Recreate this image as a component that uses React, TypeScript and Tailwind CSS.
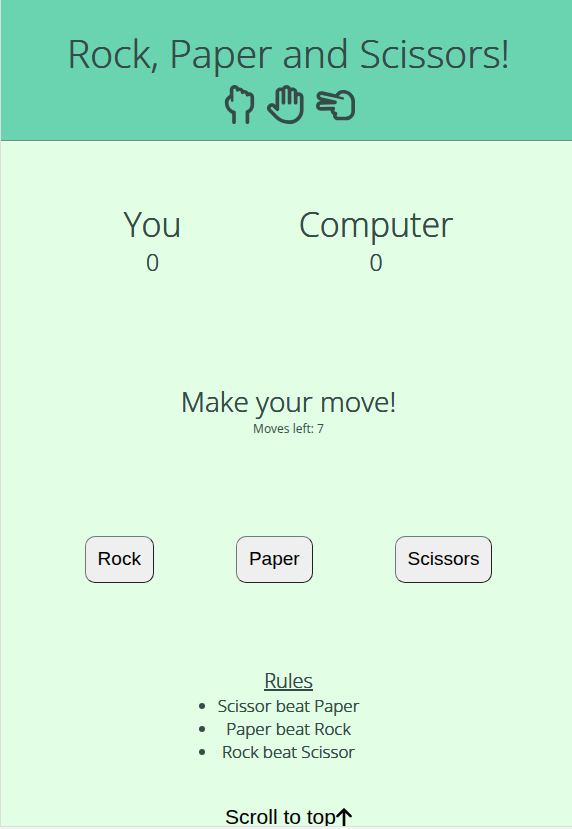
import { FaRegHandBackFist, FaRegHand, FaRegHandScissors, FaArrowUp } from "react-icons/fa6";

const rules = ["Scissor beat Paper", "Paper beat Rock", "Rock beat Scissor"];

function Score({ name, value }: { name: string; value: number }) {
  return (
    <div className="text-center">
      <h2 className="text-[34px] leading-[48px]">{name}</h2>
      <p className="text-[23px] leading-[28px]">{value}</p>
    </div>
  );
}

function MoveButton({ label }: { label: string }) {
  return (
    <button className="h-[47px] rounded-[10px] border border-t-[#767676] border-r-[#212121] border-b-[#212121] border-l-[#767676] bg-[#efefef] px-3 font-['Liberation_Sans',sans-serif] text-[19px] font-normal text-black text-shadow-none">
      {label}
    </button>
  );
}

export default function App() {
  return (
    <div id="top" className="h-screen bg-[#f4f4f4] pb-[2px]">
      <div className="h-full overflow-hidden border-b border-l border-[#dedede] bg-[#e2ffe5] font-['Open_Sans',sans-serif] font-light text-[#364b48] [text-shadow:0_0_0_currentColor,0_0_0_currentColor]">
        <header className="flex h-[141px] flex-col items-center border-b border-[#7a8c83] bg-[#6ad3b0] pt-[26px] pl-1">
          <h1 className="text-[39px] leading-[54px]">Rock, Paper and Scissors!</h1>
          <div className="mt-[5px] flex gap-[10px] text-[39px]">
            <FaRegHandBackFist className="w-[35px]" />
            <FaRegHand />
            <FaRegHandScissors />
          </div>
        </header>
        <main className="pl-1">
          <section className="flex justify-center gap-[117px] pt-[59px]">
            <Score name="You" value={0} />
            <Score name="Computer" value={0} />
          </section>
          <section className="pt-[105px] text-center">
            <h2 className="text-[28px] leading-[40px]">Make your move!</h2>
            <p className="text-[12px] leading-[16px] font-normal text-shadow-none">Moves left: 7</p>
          </section>
          <section className="flex justify-center gap-[82px] pt-[99px]">
            <MoveButton label="Rock" />
            <MoveButton label="Paper" />
            <MoveButton label="Scissors" />
          </section>
          <section className="flex flex-col items-center pt-[84px] text-center">
            <h3 className="text-[20px] leading-[27px] underline">Rules</h3>
            <ul className="list-disc text-[17px] leading-[23px]">
              {rules.map((rule) => (
                <li key={rule}>{rule}</li>
              ))}
            </ul>
          </section>
        </main>
        <footer className="flex justify-center pt-[42px] pl-1">
          <a href="#top" className="flex items-center font-['Liberation_Sans',sans-serif] text-[21px] leading-[24px] font-normal text-black text-shadow-none">
            Scroll to top
            <FaArrowUp className="w-4" />
          </a>
        </footer>
      </div>
    </div>
  );
}
